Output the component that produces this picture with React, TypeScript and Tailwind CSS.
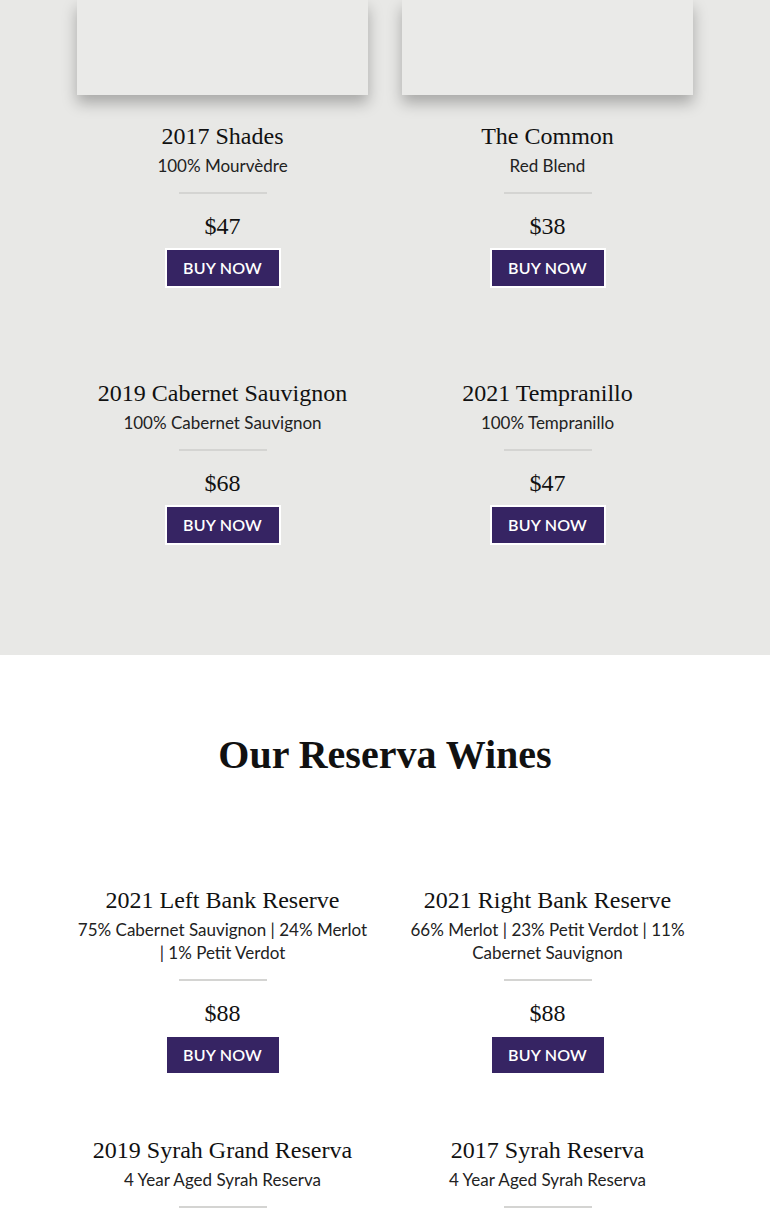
import React from "react";

type Wine = {
  name: string;
  blend: string;
  price: string;
};

const classics: Wine[] = [
  { name: "2017 Shades", blend: "100% Mourvèdre", price: "$47" },
  { name: "The Common", blend: "Red Blend", price: "$38" },
  { name: "2019 Cabernet Sauvignon", blend: "100% Cabernet Sauvignon", price: "$68" },
  { name: "2021 Tempranillo", blend: "100% Tempranillo", price: "$47" },
];

const reserves: Wine[] = [
  {
    name: "2021 Left Bank Reserve",
    blend: "75% Cabernet Sauvignon | 24% Merlot | 1% Petit Verdot",
    price: "$88",
  },
  {
    name: "2021 Right Bank Reserve",
    blend: "66% Merlot | 23% Petit Verdot | 11% Cabernet Sauvignon",
    price: "$88",
  },
  { name: "2019 Syrah Grand Reserva", blend: "4 Year Aged Syrah Reserva", price: "$95" },
  { name: "2017 Syrah Reserva", blend: "4 Year Aged Syrah Reserva", price: "$85" },
];

const serif = "font-['Liberation_Serif',serif]";
const sans = "font-['Lato',sans-serif]";

function WineCard({
  wine,
  outlined,
}: {
  wine: Wine;
  outlined?: boolean;
}) {
  return (
    <div className="flex flex-col items-center text-center">
      <h3 className={`${serif} text-[24px] leading-[30px] text-[#111]`}>
        {wine.name}
      </h3>

      <p className={`${sans} mt-[3px] text-[17px] leading-[23px] text-[#222]`}>
        {wine.blend}
      </p>

      <div className="mt-[15px] h-[2px] w-[88px] bg-[#d4d4d2]" />

      <p className={`${serif} mt-[17px] text-[24px] leading-[30px] text-[#111]`}>
        {wine.price}
      </p>

      <button
        className={`${sans} mt-[9px] flex h-[36px] w-[112px] items-center justify-center bg-[#362463] text-[16px] font-semibold tracking-[0.2px] text-white ${
          outlined ? "outline-2 outline-white" : ""
        }`}
      >
        BUY NOW
      </button>
    </div>
  );
}

export default function App() {
  return (
    <div className="w-[770px] overflow-hidden">
      <section className="bg-[#e8e8e6] pb-[112px]">
        <div className="mx-auto grid w-[616px] grid-cols-2 gap-x-[34px]">
          {classics.slice(0, 2).map((wine) => (
            <div key={wine.name} className="flex flex-col">
              <div className="h-[95px] bg-[#eaeae8] shadow-[0_8px_14px_rgba(0,0,0,0.28)]" />
              <div className="mt-[26px]">
                <WineCard wine={wine} outlined />
              </div>
            </div>
          ))}

          {classics.slice(2).map((wine) => (
            <div key={wine.name} className="mt-[92px]">
              <WineCard wine={wine} outlined />
            </div>
          ))}
        </div>
      </section>

      <section className="bg-white pt-[76px]">
        <h2
          className={`${serif} text-center text-[40px] font-bold leading-[48px] text-[#111]`}
        >
          Our Reserva Wines
        </h2>

        <div className="mx-auto mt-[106px] grid w-[616px] grid-cols-2 gap-x-[34px] gap-y-[62px] pb-[60px]">
          {reserves.map((wine) => (
            <WineCard key={wine.name} wine={wine} />
          ))}
        </div>
      </section>
    </div>
  );
}
